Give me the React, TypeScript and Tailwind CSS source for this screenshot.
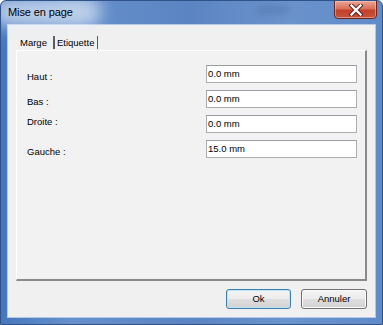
import React from 'react';

const font = { fontFamily: '"Liberation Sans", Arial, sans-serif' };

const rows = [
  { label: 'Haut :', value: '0.0 mm', labelTop: 'mt-[6px]' },
  { label: 'Bas :', value: '0.0 mm', labelTop: 'mt-[6px]' },
  { label: 'Droite :', value: '0.0 mm', labelTop: 'mt-[1px]' },
  { label: 'Gauche :', value: '15.0 mm', labelTop: 'mt-[6px]' },
];

const App: React.FC = () => {
  return (
    <div className="w-[383px] h-[325px] bg-white" style={font}>
      {/* Window frame */}
      <div className="relative w-[383px] h-[325px] rounded-t-[6px] border border-[#2f5388] bg-[linear-gradient(90deg,#4677bd_0%,#6690cb_18%,#5b85c2_50%,#6b93cc_75%,#5f8bc8_100%)] flex flex-col overflow-hidden">
        {/* Title glow */}
        <div className="absolute left-[-10px] top-[-4px] w-[110px] h-[30px] rounded-full bg-[#e4ecf8]/70 blur-[8px] pointer-events-none" />
        <div className="absolute left-[255px] top-[4px] w-[34px] h-[10px] rounded-full bg-[#41669c]/30 blur-[3px] pointer-events-none" />

        {/* Title bar */}
        <div className="relative h-[23px] flex items-center pl-[7px] shrink-0">
          <span className="text-[11px] leading-none text-black tracking-[-0.1px]">Mise en page</span>
          <div className="absolute right-[5px] top-[-1px] w-[43px] h-[19px] rounded-b-[4px] border border-[#6e2419] bg-[linear-gradient(180deg,#eaa595_0%,#d9705c_45%,#c4402a_55%,#c6553d_100%)] shadow-[inset_0_0_0_1px_rgba(255,220,210,0.45)] flex items-center justify-center">
            <svg width="14" height="12" viewBox="0 0 14 12">
              <path d="M2.5 1.5 L11.5 10.5 M11.5 1.5 L2.5 10.5" stroke="#5a1b12" strokeWidth="4.2" strokeLinecap="square" />
              <path d="M2.5 1.5 L11.5 10.5 M11.5 1.5 L2.5 10.5" stroke="#ffffff" strokeWidth="2.4" strokeLinecap="square" />
            </svg>
          </div>
        </div>

        {/* Client area */}
        <div className="mx-[6px] h-[294px] bg-[#f0f0f0] border border-[#b4c9e6] flex flex-col pt-[10px] px-[8px] shrink-0">
          {/* Tab header */}
          <div className="h-[15px] flex items-center text-[9.5px] leading-none text-black shrink-0">
            <span className="pl-[4px] pr-[6px]">Marge</span>
            <span className="w-[2px] h-[13px] bg-[#5a5a5a]" />
            <span className="pl-[2px] pr-[3px]">Etiquette</span>
            <span className="w-[1px] h-[13px] bg-[#5a5a5a]" />
          </div>

          {/* Tab panel */}
          <div className="h-[231px] bg-[#f2f2f2] border-t border-l border-t-[#ffffff] border-l-[#ffffff] border-r-2 border-b-2 border-r-[#8a8a8a] border-b-[#8a8a8a] pt-[14px] pl-[10px] pr-[8px] flex flex-col gap-[7px] shrink-0">
            {rows.map((r) => (
              <div key={r.label} className="flex items-start h-[18px]">
                <span className={`flex-1 text-[9.5px] leading-[11px] text-black ${r.labelTop}`}>{r.label}</span>
                <div className="w-[151px] h-[18px] bg-white border border-[#abadb3] border-t-[#9a9ca3] flex items-center pl-[1px] text-[9.5px] leading-none text-black">
                  {r.value}
                </div>
              </div>
            ))}
          </div>

          {/* Buttons */}
          <div className="flex justify-end gap-[10px] mt-[8px] shrink-0">
            <button className="w-[65px] h-[20px] rounded-[3px] border border-[#3c7fb1] bg-[linear-gradient(180deg,#f4f4f4_0%,#ececec_48%,#dedede_52%,#d2d2d2_100%)] shadow-[inset_0_0_0_1px_#bfe3f7] text-[9.5px] leading-none text-black">
              Ok
            </button>
            <button className="w-[66px] h-[20px] rounded-[3px] border border-[#707070] bg-[linear-gradient(180deg,#f4f4f4_0%,#ececec_48%,#dedede_52%,#d2d2d2_100%)] shadow-[inset_0_0_0_1px_#fbfbfb] text-[9.5px] leading-none text-black">
              Annuler
            </button>
          </div>
        </div>
      </div>
    </div>
  );
};

export default App;
